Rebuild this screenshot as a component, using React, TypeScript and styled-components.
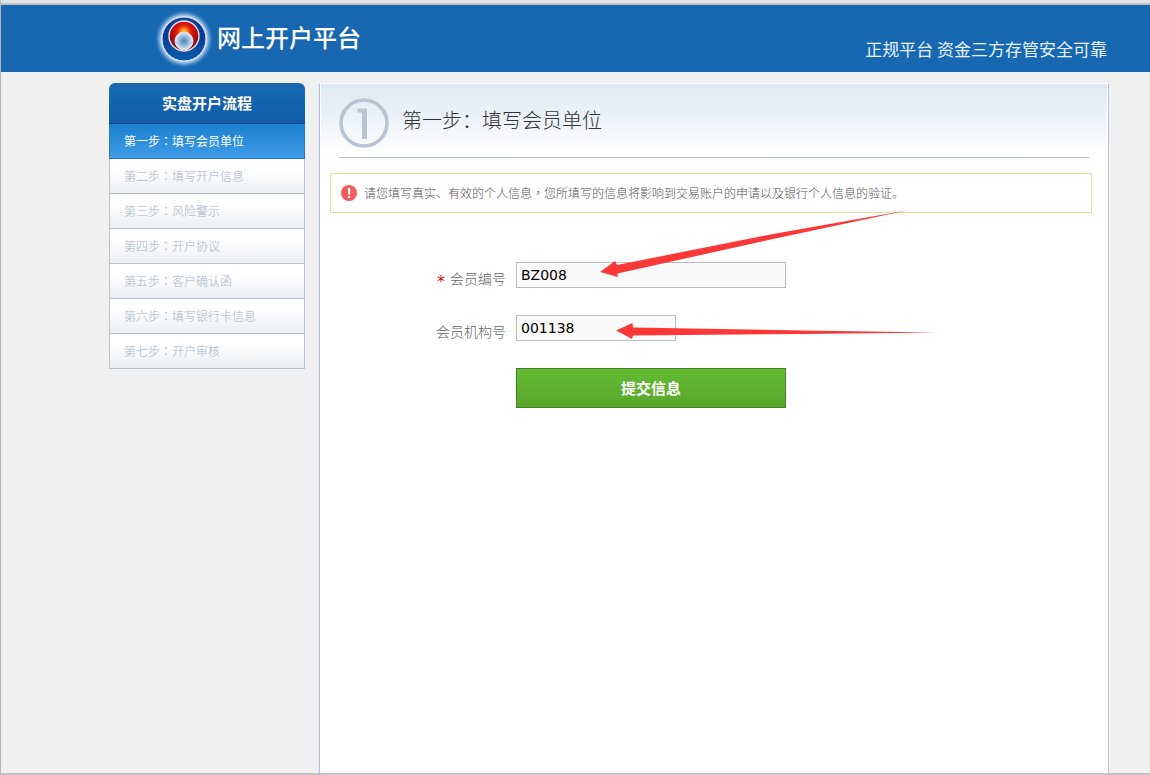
import React from "react";
import styled, { createGlobalStyle } from "styled-components";

const GlobalStyle = createGlobalStyle`
  * { box-sizing: border-box; }
  body {
    margin: 0;
    background: #f0f0f0;
    color: #333;
    font-family: "Noto Sans CJK SC", sans-serif;
    font-size: 12px;
  }
`;

const Page = styled.div`
  display: flex;
  flex-direction: column;
  min-height: 100vh;
  border-left: 1px solid #b4b4b4;
  border-bottom: 2px solid #c2c2c2;
`;

const TopEdge = styled.div`
  height: 5px;
  background: linear-gradient(#e4e4e4 0 2px, #d4d4d2 3px, #a9b3ba);
`;

const Header = styled.header`
  display: flex;
  justify-content: space-between;
  align-items: center;
  height: 67px;
  padding: 0 43px 0 152px;
  background: #1867b1;
  color: #fff;
`;

const Brand = styled.a`
  display: flex;
  align-items: center;
  gap: 2px;
  color: inherit;
  font-size: 24px;
  font-weight: 500;
  line-height: 36px;
  text-decoration: none;
`;

const BrandName = styled.span`
  padding-bottom: 4px;
`;

const Slogan = styled.p`
  margin: 20px 0 0;
  font-size: 17px;
  line-height: 24px;
  color: #e6f3ff;
`;

const Content = styled.div`
  display: flex;
  flex: 1;
  gap: 14px;
  padding: 11px 41px 0 108px;
`;

const Sidebar = styled.nav`
  flex: 0 0 196px;
`;

const SidebarTitle = styled.h2`
  margin: 0;
  border-bottom: 1px solid #0b4484;
  border-radius: 6px 6px 0 0;
  background: linear-gradient(#1a6ab5, #0f5ca8);
  color: #fff;
  font-size: 15px;
  font-weight: 700;
  line-height: 40px;
  text-align: center;
`;

const StepList = styled.ol`
  margin: 0;
  padding: 0;
  list-style: none;
`;

const Step = styled.li<{ $active?: boolean }>`
  padding: 0 14px;
  border: 1px solid ${(p) => (p.$active ? "#2b77b8" : "#b7c1cc")};
  border-top: 0;
  background: ${(p) =>
    p.$active ? "linear-gradient(#1b80d0, #3f9be6)" : "linear-gradient(#fff 30%, #ebeff2)"};
  color: ${(p) => (p.$active ? "#fff" : "#a9b5c6")};
  font-weight: ${(p) => (p.$active ? 400 : 300)};
  line-height: 34px;
`;

const MidPunct = styled.span`
  font-family: "Noto Sans CJK TC", sans-serif;
`;

const Panel = styled.main`
  flex: 1;
  min-width: 0;
  border: 1px solid #b7c2d3;
  border-top-color: #fff;
  border-bottom: 0;
  background: linear-gradient(#dfe9f3, #e9f0f8 28px, #fff 68px) no-repeat #fff;
  box-shadow: -1px 0 1px #dfe6f0, inset 1px 0 #fff, inset -1px 0 #fff;
`;

const PanelHeader = styled.div`
  display: flex;
  gap: 13px;
  margin: 0 19px;
  padding: 14px 0 9px;
  border-bottom: 1px solid #b5c4d4;
`;

const PanelTitle = styled.h1`
  margin: 7px 0 0;
  font-size: 20px;
  font-weight: 300;
  line-height: 30px;
`;

const Notice = styled.p`
  display: flex;
  align-items: center;
  gap: 7px;
  margin: 15px 16px 0 10px;
  padding: 0 10px;
  border: 1px solid #e6dfa5;
  background: #fff;
  color: #555;
  font-weight: 300;
  line-height: 38px;
`;

const NoticeIcon = styled.svg`
  flex: none;
  width: 16px;
  height: 16px;
`;

const Form = styled.form`
  position: relative;
  display: flex;
  flex-direction: column;
  gap: 27px;
  padding: 49px 0 40px;
`;

const Field = styled.div`
  display: flex;
  gap: 10px;
`;

const Label = styled.label`
  width: 186px;
  height: 26px;
  padding-top: 6px;
  color: #666;
  font-size: 14px;
  font-weight: 300;
  line-height: 20px;
  text-align: right;
`;

const Required = styled.span`
  margin-right: 5px;
  color: #c80f0f;
  font-family: "DejaVu Sans", sans-serif;
  font-size: 16px;
  font-weight: 400;
  line-height: 1;
  vertical-align: -3px;
`;

const TextInput = styled.input<{ $short?: boolean }>`
  width: ${(p) => (p.$short ? 160 : 270)}px;
  height: 26px;
  padding: 0 4px;
  border: 1px solid #bbb;
  background: #fafafa;
  color: #000;
  font: 14px "DejaVu Sans", sans-serif;
`;

const Submit = styled.button`
  width: 270px;
  height: 40px;
  margin-left: 196px;
  padding: 0 0 2px;
  border: 1px solid #447f22;
  background: linear-gradient(#66bb32, #58a62b);
  color: #fff;
  font: 700 15px "Noto Sans CJK SC", sans-serif;
`;

const Arrows = styled.svg`
  position: absolute;
  top: -4px;
  left: 280px;
  width: 340px;
  height: 132px;
  pointer-events: none;
`;

const steps = [
  ["第一步", "填写会员单位"],
  ["第二步", "填写开户信息"],
  ["第三步", "风险警示"],
  ["第四步", "开户协议"],
  ["第五步", "客户确认函"],
  ["第六步", "填写银行卡信息"],
  ["第七步", "开户审核"],
];

function Logo() {
  return (
    <svg width="62" height="62" viewBox="0 0 62 62" aria-hidden="true">
      <defs>
        <radialGradient id="glow">
          <stop offset="0.74" stopColor="#fff" />
          <stop offset="0.82" stopColor="#b9d5f2" stopOpacity="0.75" />
          <stop offset="1" stopColor="#4a92d8" stopOpacity="0" />
        </radialGradient>
        <linearGradient id="ring" x2="0" y2="1">
          <stop stopColor="#0d3f90" />
          <stop offset="0.45" stopColor="#0b3b91" />
          <stop offset="1" stopColor="#0a5cae" />
        </linearGradient>
        <radialGradient id="flame" gradientUnits="userSpaceOnUse" cx="31" cy="24" r="16">
          <stop stopColor="#ffd02c" />
          <stop offset="0.2" stopColor="#f58a14" />
          <stop offset="0.4" stopColor="#e3260c" />
          <stop offset="0.7" stopColor="#c20a0c" />
          <stop offset="1" stopColor="#86101c" />
        </radialGradient>
        <radialGradient id="core">
          <stop stopColor="#3d84b8" />
          <stop offset="0.5" stopColor="#8eb5d2" />
          <stop offset="1" stopColor="#e6edf5" />
        </radialGradient>
      </defs>
      <circle cx="31" cy="31" r="29" fill="url(#glow)" />
      <circle cx="31" cy="31" r="22" fill="url(#ring)" stroke="#dfe9fa" />
      <circle cx="31" cy="28" r="15" fill="url(#flame)" stroke="#dce3f2" strokeWidth="1.4" />
      <circle cx="31" cy="33" r="9" fill="url(#core)" stroke="#f0e5e4" />
    </svg>
  );
}

export default function App() {
  return (
    <>
      <GlobalStyle />
      <Page>
        <TopEdge />
        <Header>
          <Brand href="#">
            <Logo />
            <BrandName>网上开户平台</BrandName>
          </Brand>
          <Slogan>正规平台 资金三方存管安全可靠</Slogan>
        </Header>
        <Content>
          <Sidebar>
            <SidebarTitle>实盘开户流程</SidebarTitle>
            <StepList>
              {steps.map(([step, name], i) => (
                <Step key={step} $active={i === 0}>
                  {step}
                  <MidPunct>：</MidPunct>
                  {name}
                </Step>
              ))}
            </StepList>
          </Sidebar>
          <Panel>
            <PanelHeader>
              <svg width="50" height="50" viewBox="0 0 50 50" aria-hidden="true">
                <circle cx="25" cy="25" r="23" fill="none" stroke="#b8c3d5" strokeWidth="3.6" />
                <path d="M18.5 10.500H28V41H23V14.500H18.500Z" fill="#b8c3d5" />
              </svg>
              <PanelTitle>第一步：填写会员单位</PanelTitle>
            </PanelHeader>
            <Notice>
              <NoticeIcon viewBox="0 0 16 16" aria-hidden="true">
                <circle cx="8" cy="8" r="8" fill="#f55a5c" />
                <path d="M7 3h2.200v6.500H7zM7 11h2.200v2H7z" fill="#fff" />
              </NoticeIcon>
              <span>
                请您填写真实、有效的个人信息<MidPunct>，</MidPunct>
                您所填写的信息将影响到交易账户的申请以及银行个人信息的验证。
              </span>
            </Notice>
            <Form onSubmit={(e) => e.preventDefault()}>
              <Field>
                <Label htmlFor="member">
                  <Required>*</Required>会员编号
                </Label>
                <TextInput id="member" defaultValue="BZ008" />
              </Field>
              <Field>
                <Label htmlFor="agency">会员机构号</Label>
                <TextInput id="agency" defaultValue="001138" $short />
              </Field>
              <Submit type="submit">提交信息</Submit>
              <Arrows viewBox="600 209 340 132" fill="#fb3838" aria-hidden="true">
                <path d="M600 272L615 261L617 265L773 234L909 210L773 239L617.500 273.500L618 277Z" />
                <path d="M616 330.500L632.500 323L633 327.500L803 330.500L936 332.500L803 334L633 335.500L632 339Z" />
              </Arrows>
            </Form>
          </Panel>
        </Content>
      </Page>
    </>
  );
}
